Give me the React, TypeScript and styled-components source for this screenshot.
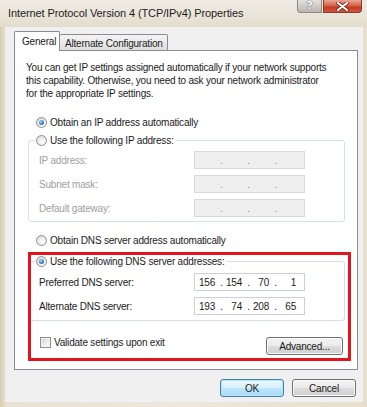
import React from "react";
import styled, { createGlobalStyle } from "styled-components";

interface IpRow {
  label: string;
  value?: string[];
}

const ipRows: IpRow[] = [
  { label: "IP address:" },
  { label: "Subnet mask:" },
  { label: "Default gateway:" },
];

const dnsRows: IpRow[] = [
  { label: "Preferred DNS server:", value: ["156", "154", "70", "1"] },
  { label: "Alternate DNS server:", value: ["193", "74", "208", "65"] },
];

const GlobalStyle = createGlobalStyle`
  html, body {
    margin: 0;
    padding: 0;
    background: #e4dccb;
  }
  body {
    font-family: "Liberation Sans", Arial, sans-serif;
    font-size: 10px;
    letter-spacing: -0.2px;
    color: #1b1b1b;
  }
`;

const IpField = ({ row, disabled }: { row: IpRow; disabled?: boolean }) => {
  const octets = row.value || ["", "", "", ""];
  return (
    <IpBox $disabled={disabled}>
      {octets.map((octet, i) => (
        <React.Fragment key={i}>
          <Octet>{octet}</Octet>
          {i < 3 && <Dot $disabled={disabled}>.</Dot>}
        </React.Fragment>
      ))}
    </IpBox>
  );
};

const Option = ({
  label,
  checked,
}: {
  label: string;
  checked?: boolean;
}) => {
  return (
    <OptionRow>
      <Radio $checked={checked} />
      <span>{label}</span>
    </OptionRow>
  );
};

export default function App() {
  return (
    <Window>
      <GlobalStyle />
      <TitleBar>
        <Title>Internet Protocol Version 4 (TCP/IPv4) Properties</Title>
        <Controls>
          <HelpButton>?</HelpButton>
          <CloseButton>
            <svg width="13" height="9" viewBox="0 0 13 9">
              <path
                d="M2 1 L11 8 M11 1 L2 8"
                stroke="#6b1f14"
                strokeWidth="3.6"
                strokeLinecap="round"
              />
              <path
                d="M2 1 L11 8 M11 1 L2 8"
                stroke="#ffffff"
                strokeWidth="2.2"
                strokeLinecap="round"
              />
            </svg>
          </CloseButton>
        </Controls>
      </TitleBar>
      <Client>
        <TabRow>
          <Tab $active>General</Tab>
          <Tab>Alternate Configuration</Tab>
        </TabRow>
        <Panel>
          <Intro>
            You can get IP settings assigned automatically if your network supports
            <br />
            this capability. Otherwise, you need to ask your network administrator
            <br />
            for the appropriate IP settings.
          </Intro>
          <TopOption>
            <Option label="Obtain an IP address automatically" checked />
          </TopOption>
          <Group>
            <Legend>
              <Option label="Use the following IP address:" />
            </Legend>
            {ipRows.map((row) => (
              <FieldRow key={row.label} $disabled>
                <span>{row.label}</span>
                <IpField row={row} disabled />
              </FieldRow>
            ))}
          </Group>
          <DnsOption>
            <Option label="Obtain DNS server address automatically" />
          </DnsOption>
          <Group $dns>
            <Legend>
              <Option label="Use the following DNS server addresses:" checked />
            </Legend>
            {dnsRows.map((row) => (
              <FieldRow key={row.label}>
                <span>{row.label}</span>
                <IpField row={row} />
              </FieldRow>
            ))}
          </Group>
          <BottomRow>
            <OptionRow>
              <Checkbox />
              <span>Validate settings upon exit</span>
            </OptionRow>
            <Button $width={77}>Advanced...</Button>
          </BottomRow>
          <Highlight />
        </Panel>
        <Footer>
          <Button $width={64} $default>
            OK
          </Button>
          <Button $width={64}>Cancel</Button>
        </Footer>
      </Client>
    </Window>
  );
}

const Window = styled.div`
  width: 367px;
  height: 407px;
  display: flex;
  flex-direction: column;
  background: linear-gradient(90deg, #d8ccb1 0px, #e8e2d3 6px, #ece8dd 50%, #e6dfcd 100%);
  overflow: hidden;
`;

const TitleBar = styled.div`
  height: 27px;
  display: flex;
  justify-content: space-between;
  align-items: flex-start;
  background: linear-gradient(180deg, #efebe1 0%, #e9e4d8 60%, #e2dccb 100%);
  flex: none;
`;

const Title = styled.div`
  padding: 7px 0 0 8px;
  font-size: 11px;
  letter-spacing: -0.1px;
  color: #1e1e1e;
  white-space: nowrap;
`;

const Controls = styled.div`
  display: flex;
  gap: 1px;
  margin-right: 5px;
`;

const HelpButton = styled.div`
  width: 25px;
  height: 13px;
  box-sizing: border-box;
  border: 1px solid #8c8a86;
  border-top: none;
  border-radius: 0 0 0 4px;
  background: linear-gradient(180deg, #e3e1dc 0%, #cfccc6 50%, #b9b6b0 100%);
  color: #ffffff;
  font-family: "DejaVu Sans", sans-serif;
  font-weight: bold;
  font-size: 11px;
  line-height: 11px;
  text-align: center;
  text-shadow: 0 0 1px #555, 0 0 1px #555;
`;

const CloseButton = styled.div`
  width: 39px;
  height: 13px;
  box-sizing: border-box;
  border: 1px solid #8a3a2c;
  border-top: none;
  border-radius: 0 0 4px 0;
  background: linear-gradient(180deg, #e9a593 0%, #d5664f 45%, #c23a22 60%, #d2543a 100%);
  display: flex;
  align-items: center;
  justify-content: center;
`;

const Client = styled.div`
  flex: 1;
  margin: 0 4px 5px 5px;
  padding: 4px 5px 0 9px;
  background: #f0f0f0;
  display: flex;
  flex-direction: column;
`;

const TabRow = styled.div`
  display: flex;
  align-items: flex-end;
  height: 20px;
  margin-bottom: -1px;
  position: relative;
  z-index: 1;
`;

const Tab = styled.div<{ $active?: boolean }>`
  box-sizing: border-box;
  height: ${(p) => (p.$active ? "20px" : "17px")};
  padding: ${(p) => (p.$active ? "4px 0 0 7px" : "3px 0 0 5px")};
  width: ${(p) => (p.$active ? "46px" : "108px")};
  border: 1px solid #898c95;
  border-bottom: ${(p) => (p.$active ? "none" : "1px solid #898c95")};
  border-left: ${(p) => (p.$active ? "1px solid #898c95" : "none")};
  border-radius: 2px 2px 0 0;
  background: ${(p) =>
    p.$active ? "#ffffff" : "linear-gradient(180deg, #f3f3f3 0%, #ebebeb 50%, #dddddd 100%)"};
  white-space: nowrap;
`;

const Panel = styled.div`
  position: relative;
  background: #ffffff;
  border: 1px solid #898c95;
  padding: 10px 12px 14px 11px;
  display: flex;
  flex-direction: column;
`;

const Intro = styled.p`
  margin: 0;
  line-height: 13px;
  white-space: nowrap;
`;

const OptionRow = styled.div`
  display: flex;
  align-items: center;
  gap: 3px;
  height: 14px;
  white-space: nowrap;
`;

const TopOption = styled.div`
  margin: 15px 0 0 10px;
`;

const DnsOption = styled.div`
  margin: 11px 0 0 10px;
`;

const Radio = styled.span<{ $checked?: boolean }>`
  position: relative;
  flex: none;
  width: 11px;
  height: 11px;
  box-sizing: border-box;
  border-radius: 50%;
  border: 1px solid #8e8f8f;
  background: radial-gradient(circle at 60% 65%, #ffffff 0%, #f0f0f0 40%, #cfcfcf 100%);

  &::after {
    content: "";
    display: ${(p) => (p.$checked ? "block" : "none")};
    position: absolute;
    inset: 2px;
    border-radius: 50%;
    background: radial-gradient(circle at 40% 35%, #a9dcf7 0%, #3b7fc4 55%, #1b4f8e 100%);
  }
`;

const Checkbox = styled.span`
  flex: none;
  width: 11px;
  height: 11px;
  box-sizing: border-box;
  border: 1px solid #8e8f8f;
  box-shadow: inset 0 0 0 1px #f4f4f4;
  background: linear-gradient(135deg, #cfcfcf 0%, #eeeeee 60%, #fafafa 100%);
`;

const Group = styled.fieldset<{ $dns?: boolean }>`
  margin: ${(p) => (p.$dns ? "7px 0 0 2px" : "4px 0 0 2px")};
  padding: ${(p) => (p.$dns ? "5px 0 5px 10px" : "4px 0 4px 10px")};
  border: 1px solid #d5dfe5;
  border-radius: 3px;
  display: flex;
  flex-direction: column;
  gap: 6px;
  min-width: 0;
`;

const Legend = styled.legend`
  padding: 0 2px 0 1px;
  margin-left: -4px;
`;

const FieldRow = styled.div<{ $disabled?: boolean }>`
  display: flex;
  justify-content: space-between;
  align-items: center;
  padding-right: 39px;
  color: ${(p) => (p.$disabled ? "#9e9e9e" : "#1b1b1b")};
`;

const IpBox = styled.div<{ $disabled?: boolean }>`
  box-sizing: border-box;
  width: 111px;
  height: 18px;
  display: flex;
  align-items: center;
  padding-left: 2px;
  border: 1px solid ${(p) => (p.$disabled ? "#dadada" : "#cdd0d4")};
  background: ${(p) => (p.$disabled ? "#efefef" : "#ffffff")};
  color: #1b1b1b;
`;

const Octet = styled.span`
  width: 22px;
  box-sizing: border-box;
  padding-right: 4px;
  text-align: right;
`;

const Dot = styled.span<{ $disabled?: boolean }>`
  width: 5px;
  text-align: center;
  color: ${(p) => (p.$disabled ? "#8a8a8a" : "#1b1b1b")};
`;

const BottomRow = styled.div`
  display: flex;
  justify-content: space-between;
  align-items: flex-start;
  margin-top: 16px;
  padding: 0 2px 0 14px;

  & > ${OptionRow} {
    margin-top: -2px;
  }
`;

const Button = styled.div<{ $width: number; $default?: boolean }>`
  box-sizing: border-box;
  width: ${(p) => p.$width}px;
  height: 18px;
  display: flex;
  align-items: center;
  justify-content: center;
  border: 1px solid ${(p) => (p.$default ? "#3c7fb1" : "#707070")};
  border-radius: 3px;
  box-shadow: inset 0 0 0 1px ${(p) => (p.$default ? "#bde4f7" : "#fbfbfb")};
  background: ${(p) =>
    p.$default
      ? "linear-gradient(180deg, #eaf6fd 0%, #d9f0fc 50%, #bee6fd 51%, #a7d9f5 100%)"
      : "linear-gradient(180deg, #f2f2f2 0%, #ebebeb 50%, #dddddd 51%, #cfcfcf 100%)"};
  color: #1b1b1b;
`;

const Footer = styled.div`
  display: flex;
  justify-content: flex-end;
  gap: 8px;
  padding: 9px 2px 0 0;
`;

const Highlight = styled.div`
  position: absolute;
  left: 13px;
  top: 201px;
  width: 323px;
  height: 109px;
  box-sizing: border-box;
  border: 3px solid #e3141e;
  pointer-events: none;
`;
